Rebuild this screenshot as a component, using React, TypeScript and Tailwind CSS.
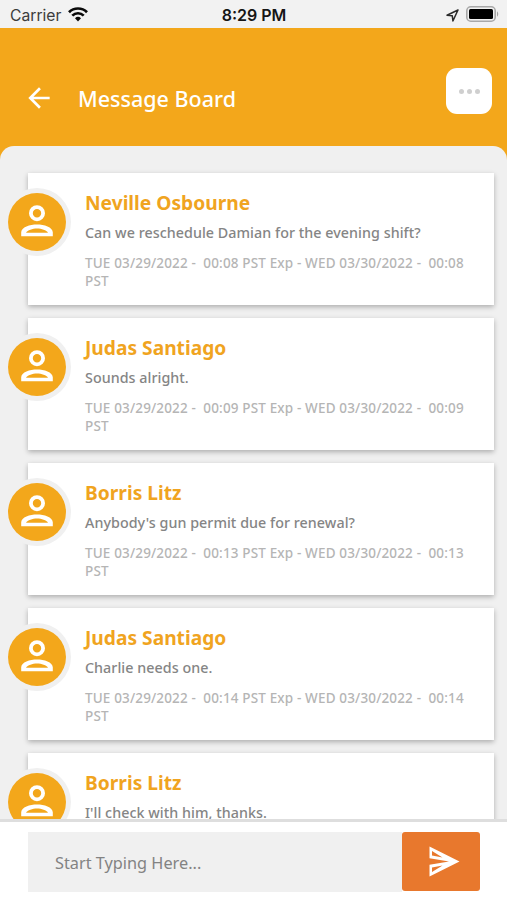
import { useState } from "react";
import { MdArrowBack } from "react-icons/md";

interface Message {
  id: number;
  name: string;
  text: string;
  time: string;
}

const messages: Message[] = [
  { id: 1, name: "Neville Osbourne", text: "Can we reschedule Damian for the evening shift?", time: "00:08" },
  { id: 2, name: "Judas Santiago", text: "Sounds alright.", time: "00:09" },
  { id: 3, name: "Borris Litz", text: "Anybody's gun permit due for renewal?", time: "00:13" },
  { id: 4, name: "Judas Santiago", text: "Charlie needs one.", time: "00:14" },
  { id: 5, name: "Borris Litz", text: "I'll check with him, thanks.", time: "00:15" },
];

function StatusBar() {
  return (
    <div className="grid h-7 shrink-0 grid-cols-3 items-center bg-[#f2f2f2] pt-0.5 pr-2 pl-[10px] font-['Inter',sans-serif] text-[16px]">
      <div className="flex items-center gap-[7px]">
        <span className="relative top-px text-[15.7px] text-[#3c3c3c]">Carrier</span>
        <svg width="20" height="15" viewBox="0 0 20 15" fill="none" stroke="#0a0a0a" strokeWidth="2.7">
          <path d="M1 5.2a12.8 12.8 0 0 1 18 0" />
          <path d="M4.3 8.6a8.1 8.1 0 0 1 11.4 0" />
          <path d="M10 14.5l-3-3.2a4.3 4.3 0 0 1 6 0z" fill="#0a0a0a" stroke="none" />
        </svg>
      </div>
      <span className="pr-px text-center font-semibold whitespace-nowrap text-[#161616]">8:29 PM</span>
      <div className="flex items-center justify-end gap-[7px]">
        <svg width="13" height="13" viewBox="0 0 13 13" fill="none" stroke="#2a2a2a" strokeWidth="1.5" strokeLinejoin="round">
          <path d="M12 1L1 6.2l5.3.6.6 5.2z" />
        </svg>
        <svg width="33" height="16" viewBox="0 0 33 16" className="relative -top-px">
          <rect x="0.8" y="0.8" width="28.4" height="14.4" rx="4" fill="#f2f2f2" stroke="#a8a8a8" strokeWidth="1.6" />
          <rect x="3" y="3" width="24" height="10" rx="1.5" fill="#000" />
          <path d="M31 5.5c1.6.6 1.6 4.4 0 5z" fill="#a3a3a3" />
        </svg>
      </div>
    </div>
  );
}

function Avatar() {
  return (
    <div className="absolute top-[15.5px] -left-[25px] flex size-[68px] items-center justify-center rounded-full bg-[#f0f0f0]">
      <div className="flex size-[58px] items-center justify-center rounded-full bg-[#f3a71b] pb-[2px]">
        <svg width="32" height="32" viewBox="0 0 32 32" fill="none" stroke="#fff">
          <circle cx="16" cy="8.2" r="6.1" strokeWidth="3.8" />
          <path
            d="M0.2 31.3v-4C0.2 22 9 19.4 16 19.4S31.8 22 31.8 27.3v4zM5 27.8h22c-1.5-2.6-6.5-4.2-11-4.2S6.5 25.2 5 27.8z"
            fill="#fff"
            fillRule="evenodd"
            stroke="none"
          />
        </svg>
      </div>
    </div>
  );
}

function MessageCard({ message }: { message: Message }) {
  return (
    <div className="relative h-[132px] shrink-0 bg-white pt-[17px] pr-6 pl-[57px] shadow-[0_2px_5px_rgba(0,0,0,0.28)]">
      <Avatar />
      <h2 className="text-[19.2px] leading-[26px] font-bold text-[#f0a41f]">{message.name}</h2>
      <p className="mt-[7px] text-[14.3px] leading-5 font-medium tracking-[0.04px] text-[#858585]">{message.text}</p>
      <p className="mt-[11px] text-[13.5px] leading-[18px] font-medium tracking-[0.15px] whitespace-pre-wrap text-[#b5b5b5]">
        {`TUE 03/29/2022 -  ${message.time} PST Exp - WED 03/30/2022 -  ${message.time} PST`}
      </p>
    </div>
  );
}

export default function App() {
  const [draft, setDraft] = useState("");

  return (
    <div className="flex h-[900px] w-[507px] flex-col overflow-hidden bg-[#f3a71b] font-['Noto_Sans',sans-serif]">
      <StatusBar />

      <header className="flex h-[117.5px] shrink-0 items-start pr-[15px] pl-[23px]">
        <button className="mt-[54px] text-white">
          <MdArrowBack size={32} />
        </button>
        <h1 className="mt-[55px] ml-[23px] flex-1 text-[21.5px] leading-8 font-medium text-white">
          Message Board
        </h1>
        <button className="mt-10 flex size-[46px] items-center justify-center gap-[3px] rounded-[11px] bg-white">
          <span className="size-[5px] rounded-full bg-[#cfcfcf]" />
          <span className="size-[5px] rounded-full bg-[#cfcfcf]" />
          <span className="size-[5px] rounded-full bg-[#cfcfcf]" />
        </button>
      </header>

      <main className="flex min-h-0 flex-1 flex-col gap-[13px] overflow-hidden rounded-t-[14px] bg-[#f0f0f0] pt-[27px] pr-[13.5px] pl-7">
        {messages.map((message) => (
          <MessageCard key={message.id} message={message} />
        ))}
      </main>

      <footer className="flex h-[81px] shrink-0 items-start border-t-[3px] border-[#dedede] bg-white pt-[10px] pr-[27px] pl-7">
        <input
          value={draft}
          onChange={(e) => setDraft(e.target.value)}
          placeholder="Start Typing Here..."
          className="h-[60px] min-w-0 flex-1 bg-[#f0f0f0] pt-[2px] pl-[27px] text-[16.3px] text-[#333] outline-none placeholder:text-[#838383]"
        />
        <button className="flex h-[59px] w-[78px] items-center justify-center rounded-[3px] bg-[#e8782d] pl-[6px]">
          <svg width="31" height="31" viewBox="0 0 31 31" fill="#fff" fillRule="evenodd">
            <path d="M0.5 0.5L30.5 15.5L0.5 30.5V18.8L20 15.5L0.5 12.2zM3 5V9.5L13.5 11.5zM3 26V21.5L13.5 19.5z" />
          </svg>
        </button>
      </footer>
    </div>
  );
}
